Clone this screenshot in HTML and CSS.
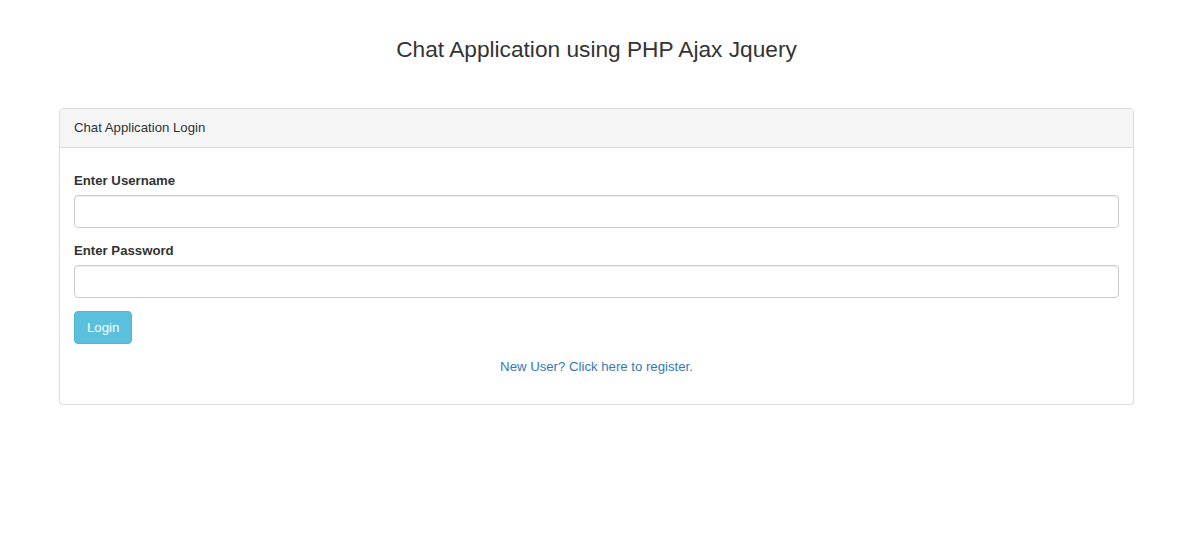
FILE: index.html
```html
<!DOCTYPE html>
<html>
<head>
<meta charset="utf-8">
<title>Chat Application</title>
<link rel="stylesheet" href="styles.css">
</head>
<body>
<div class="container">
  <h3 class="title">Chat Application using PHP Ajax Jquery</h3>
  <div class="panel">
    <div class="panel-heading">Chat Application Login</div>
    <div class="panel-body">
      <form class="form">
        <div class="form-group">
          <label class="label">Enter Username</label>
          <input type="text" class="input">
        </div>
        <div class="form-group">
          <label class="label">Enter Password</label>
          <input type="password" class="input">
        </div>
        <div class="btn-row">
          <button type="button" class="btn">Login</button>
        </div>
        <div class="link-row">
          <a class="link" href="#">New User? Click here to register.</a>
        </div>
      </form>
    </div>
  </div>
</div>
</body>
</html>
```

FILE: styles.css
```css
* { box-sizing: border-box; }
html, body { margin: 0; padding: 0; background: #fff; }
body {
  font-family: "Liberation Sans", Arial, Helvetica, sans-serif;
  font-size: 13.2px;
  line-height: 20px;
  color: #333;
}
.container {
  width: 1075px;
  margin-left: 59px;
}
.title {
  margin: 0;
  padding-top: 37px;
  height: 108px;
  font-size: 22.7px;
  font-weight: 400;
  line-height: 24px;
  text-align: center;
  color: #333;
}
.panel {
  border: 1px solid #ddd;
  border-radius: 4px;
  box-shadow: 0 1px 1px rgba(0,0,0,.05);
  background: #fff;
}
.panel-heading {
  padding: 9px 14px;
  background: #f5f5f5;
  border-bottom: 1px solid #ddd;
  border-radius: 3px 3px 0 0;
  color: #333;
}
.panel-body {
  padding: 23px 14px 27px;
}
.form { margin: 0; }
.form-group {
  display: flex;
  flex-direction: column;
  margin-bottom: 13px;
}
.label {
  font-weight: 700;
  margin-bottom: 4px;
}
.input {
  height: 33px;
  width: 100%;
  border: 1px solid #ccc;
  border-radius: 4px;
  box-shadow: inset 0 1px 1px rgba(0,0,0,.075);
  padding: 6px 12px;
  font: inherit;
}
.btn-row {
  display: flex;
  margin-top: 1px;
}
.btn {
  height: 33px;
  padding: 0 12px;
  background: #5bc0de;
  border: 1px solid #46b8da;
  border-radius: 4px;
  color: #fff;
  font: inherit;
  line-height: 20px;
}
.link-row {
  margin-top: 13px;
  text-align: center;
}
.link {
  color: #337ab7;
  text-decoration: none;
}
```
